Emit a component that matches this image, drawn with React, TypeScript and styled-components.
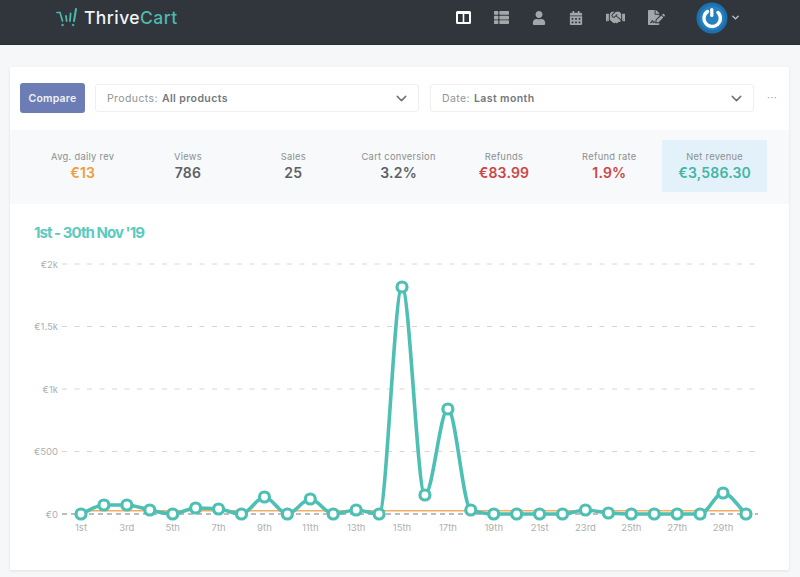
import React from "react";
import styled, { createGlobalStyle } from "styled-components";
import { FaThList, FaUser, FaCalendarAlt, FaHandshake, FaFileSignature } from "react-icons/fa";
import { FiChevronDown } from "react-icons/fi";

const Global = createGlobalStyle`
  html, body { margin: 0; padding: 0; background: #f6f7f8; }
  body { font-family: Inter, "Liberation Sans", sans-serif; width: 800px; height: 577px; overflow: hidden; }
  * { box-sizing: border-box; }
`;

const Header = styled.header`
  height: 45px;
  background: #30363c;
  display: flex;
  align-items: flex-start;
  padding: 0 0 0 56px;
  border-bottom: 1px solid #2a2f34;
`;
const Logo = styled.div`
  display: flex;
  align-items: center;
  gap: 6px;
  width: 374px;
  height: 35px;
`;
const LogoText = styled.span`
  font-family: Inter, sans-serif;
  font-size: 17.5px;
  font-weight: 500;
  letter-spacing: 0.45px;
  color: #f2f3f4;
`;
const LogoAccent = styled.span`
  color: #4fb8ae;
`;
const Nav = styled.nav`
  display: flex;
  align-items: center;
  gap: 23px;
  height: 35px;
  margin-left: 26px;
`;
const NavIcon = styled.span<{ $active?: boolean }>`
  display: flex;
  color: ${(p) => (p.$active ? "#ffffff" : "#a3a7aa")};
`;
const Account = styled.div`
  display: flex;
  align-items: center;
  gap: 2px;
  height: 35px;
  margin-left: 31px;
  color: #c9cccf;
`;

const Card = styled.main`
  width: 779px;
  height: 503px;
  margin: 22px 0 0 10px;
  background: #fff;
  border-radius: 2px;
  box-shadow: 0 1px 3px rgba(40, 50, 60, 0.1);
`;
const Toolbar = styled.div`
  height: 63px;
  padding: 16px 0 0 10px;
  display: flex;
  align-items: flex-start;
`;
const CompareButton = styled.button`
  width: 65px;
  height: 30px;
  border: 0;
  border-radius: 3px;
  background: #6b7db4;
  color: #f0f2f8;
  font: 600 10.5px Inter, sans-serif;
  letter-spacing: 0.2px;
  padding: 0;
  margin-right: 10px;
`;
const Select = styled.div`
  width: 324px;
  height: 28px;
  margin: 1px 11px 0 0;
  border: 1px solid #eeeff1;
  border-radius: 3px;
  display: flex;
  align-items: center;
  padding: 0 8px 0 11px;
  font-size: 10.5px;
  letter-spacing: 0.4px;
  color: #8f9498;
`;
const SelectValue = styled.strong`
  font-weight: 600;
  color: #73787c;
  margin-left: 4px;
  flex: 1;
`;
const More = styled.span`
  font-size: 10px;
  color: #a2a6a9;
  letter-spacing: 0.5px;
  line-height: 28px;
  margin-left: 2px;
`;

const StatsBand = styled.section`
  height: 74px;
  padding: 10px 0 0 20px;
  display: flex;
  align-items: flex-start;
  background: #f7f9fa;
`;
const Stat = styled.div<{ $highlight?: boolean }>`
  width: 105.33px;
  height: 52px;
  padding-top: 11px;
  text-align: center;
  background: ${(p) => (p.$highlight ? "#e3f1fa" : "transparent")};
`;
const StatLabel = styled.div`
  font-size: 9.3px;
  line-height: 12px;
  letter-spacing: 0.3px;
  color: #8b8f93;
`;
const StatValue = styled.div<{ $color: string }>`
  font-size: 14px;
  line-height: 19px;
  font-weight: 600;
  letter-spacing: 0.2px;
  color: ${(p) => p.$color};
`;

const ChartTitle = styled.h2`
  margin: 0;
  padding: 20px 0 0 24px;
  height: 46px;
  font-size: 15px;
  line-height: 18px;
  font-weight: 700;
  letter-spacing: -0.95px;
  color: #5ccabf;
`;
const ChartSvg = styled.svg`
  display: block;
  width: 779px;
  height: 320px;
`;

const TEAL = "#4dbfb3";
const ys = [514, 505, 505, 510, 514, 508, 509, 514, 497, 514, 499, 514, 510, 514, 287, 495, 409, 510, 514, 514, 514, 514, 510, 513, 514, 514, 514, 514, 493, 514];
const OX = 10;
const OY = 250;
const pts = ys.map((y, i) => [81 + i * 22.93 - OX, y - OY]);

function monotonePath(p: number[][]) {
  const n = p.length;
  const d: number[] = [];
  for (let i = 0; i < n - 1; i++) d.push((p[i + 1][1] - p[i][1]) / (p[i + 1][0] - p[i][0]));
  const m: number[] = [d[0]];
  for (let i = 1; i < n - 1; i++) m.push(d[i - 1] * d[i] <= 0 ? 0 : (2 * d[i - 1] * d[i]) / (d[i - 1] + d[i]));
  m.push(d[n - 2]);
  let s = `M${p[0][0]} ${p[0][1]}`;
  for (let i = 0; i < n - 1; i++) {
    const h = (p[i + 1][0] - p[i][0]) / 3;
    s += `C${p[i][0] + h} ${p[i][1] + m[i] * h} ${p[i + 1][0] - h} ${p[i + 1][1] - m[i + 1] * h} ${p[i + 1][0]} ${p[i + 1][1]}`;
  }
  return s;
}

const grid = [
  { y: 264, label: "€2k" },
  { y: 326.5, label: "€1.5k" },
  { y: 389, label: "€1k" },
  { y: 451.5, label: "€500" },
];
const xLabels = ["1st", "3rd", "5th", "7th", "9th", "11th", "13th", "15th", "17th", "19th", "21st", "23rd", "25th", "27th", "29th"];
const stats = [
  { label: "Avg. daily rev", value: "€13", color: "#ee9d3e" },
  { label: "Views", value: "786", color: "#5d6165" },
  { label: "Sales", value: "25", color: "#5d6165" },
  { label: "Cart conversion", value: "3.2%", color: "#5d6165" },
  { label: "Refunds", value: "€83.99", color: "#cb4646" },
  { label: "Refund rate", value: "1.9%", color: "#cb4646" },
  { label: "Net revenue", value: "€3,586.30", color: "#43b5a5", highlight: true },
];

export default function App() {
  return (
    <>
      <Global />
      <Header>
        <Logo>
          <svg width="22" height="20" viewBox="0 0 22 20" fill="none" stroke="#4fb8ae" strokeLinecap="round">
            <path d="M1 4.5 H4 L6.5 13" strokeWidth="1.7" />
            <path d="M10 8 L10.6 13" strokeWidth="1.8" />
            <path d="M14.6 5.5 L14 13" strokeWidth="1.8" />
            <path d="M20 1 L18 13" strokeWidth="2" />
            <circle cx="6.5" cy="17" r="0.9" fill="#4fb8ae" strokeWidth="0.5" />
            <circle cx="17" cy="17" r="0.9" fill="#4fb8ae" strokeWidth="0.5" />
          </svg>
          <LogoText>
            Thrive<LogoAccent>Cart</LogoAccent>
          </LogoText>
        </Logo>
        <Nav>
          <NavIcon $active>
            <svg width="15" height="13" viewBox="0 0 15 13" fill="none" stroke="currentColor">
              <rect x="1" y="1" width="13" height="11" strokeWidth="2" rx="0.5" />
              <path d="M7.5 1 V12" strokeWidth="1.6" />
              <path d="M1 2 H14" strokeWidth="2" />
            </svg>
          </NavIcon>
          <NavIcon><FaThList size={15} /></NavIcon>
          <NavIcon><FaUser size={14} /></NavIcon>
          <NavIcon><FaCalendarAlt size={14} /></NavIcon>
          <NavIcon><FaHandshake size={19} /></NavIcon>
          <NavIcon><FaFileSignature size={17} /></NavIcon>
        </Nav>
        <Account>
          <svg width="32" height="32" viewBox="0 0 32 32" fill="none">
            <circle cx="16" cy="16" r="15.5" fill="#1d70ad" />
            <circle cx="16" cy="16" r="12.5" fill="#2580bd" />
            <path d="M11.5 9.5 A8.2 8.2 0 1 0 22 10.5" stroke="#fff" strokeWidth="3.4" strokeLinecap="round" />
            <path d="M15.8 7.5 V13.5" stroke="#fff" strokeWidth="3.2" strokeLinecap="round" />
          </svg>
          <FiChevronDown size={11} strokeWidth={3} />
        </Account>
      </Header>
      <Card>
        <Toolbar>
          <CompareButton>Compare</CompareButton>
          <Select>
            Products:<SelectValue>All products</SelectValue>
            <FiChevronDown size={17} color="#6d7175" />
          </Select>
          <Select>
            Date:<SelectValue>Last month</SelectValue>
            <FiChevronDown size={17} color="#6d7175" />
          </Select>
          <More>···</More>
        </Toolbar>
        <StatsBand>
          {stats.map((s) => (
            <Stat key={s.label} $highlight={s.highlight}>
              <StatLabel>{s.label}</StatLabel>
              <StatValue $color={s.color}>{s.value}</StatValue>
            </Stat>
          ))}
        </StatsBand>
        <ChartTitle>1st - 30th Nov '19</ChartTitle>
        <ChartSvg viewBox="0 0 779 320" fontFamily="Inter, sans-serif" fontSize="9.5">
          {grid.map((g) => (
            <g key={g.label}>
              <text x={48} y={g.y - OY + 3.5} textAnchor="end" fill="#adb0b2">{g.label}</text>
              <line x1={52} x2={748} y1={g.y - OY} y2={g.y - OY} stroke="#d4d6d8" strokeDasharray="5 7.5" />
            </g>
          ))}
          <text x={48} y={514 - OY + 3.5} textAnchor="end" fill="#adb0b2">€0</text>
          <line x1={52} x2={748} y1={264} y2={264} stroke="#77797c" strokeDasharray="5 4" />
          <line x1={70} x2={738} y1={260.7} y2={260.7} stroke="#f0ad66" strokeWidth="1.6" />
          {xLabels.map((l, i) => (
            <text key={l} x={pts[i * 2][0]} y={280.5} textAnchor="middle" fill="#adb0b2">{l}</text>
          ))}
          <path d={monotonePath(pts)} fill="none" stroke={TEAL} strokeWidth="3.6" />
          {pts.map((p, i) => (
            <circle key={i} cx={p[0]} cy={p[1]} r="5" fill="#fff" stroke={TEAL} strokeWidth="3.2" />
          ))}
        </ChartSvg>
      </Card>
    </>
  );
}
